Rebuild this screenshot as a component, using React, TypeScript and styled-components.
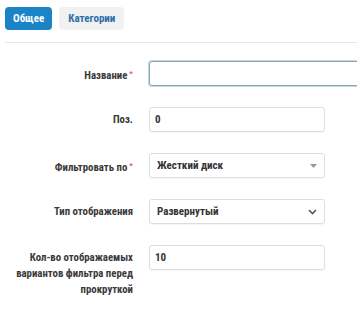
import React from "react";
import styled, { createGlobalStyle } from "styled-components";

const Global = createGlobalStyle`
  html, body { margin: 0; padding: 0; background: #fff; overflow: hidden; }
  body {
    font-family: "Roboto Condensed", "Liberation Sans Narrow", "DejaVu Sans Condensed", Roboto, sans-serif;
    color: #333;
  }
`;

const Page = styled.div`
  width: 357px;
  height: 317px;
  overflow: hidden;
`;

const TabBar = styled.div`
  display: flex;
  gap: 7px;
  margin-left: 5px;
  padding: 7px 0 12px;
  border-bottom: 1px solid #e6e6e6;
`;

const Tab = styled.div<{ $active?: boolean }>`
  height: 23px;
  padding: 0 ${(p) => (p.$active ? "8px" : "9px")};
  display: flex;
  align-items: center;
  border-radius: 4px;
  font-size: 11px;
  font-weight: 700;
  background: ${(p) => (p.$active ? "#1b84c6" : "#f1f1f1")};
  color: ${(p) => (p.$active ? "#fff" : "#2d6ea6")};
`;

const Form = styled.div`
  display: grid;
  grid-template-columns: 133px auto;
  column-gap: 16px;
  row-gap: 21px;
  padding-top: 18px;
  align-items: start;
`;

const Label = styled.div`
  text-align: right;
  font-size: 10.8px;
  font-weight: 700;
  line-height: 16px;
  padding-top: 5px;
  color: #3a3a3a;
`;

const Req = styled.span`
  color: #e25a55;
  font-size: 8px;
  margin-left: 2px;
  vertical-align: 3px;
`;

const Field = styled.div<{ $wide?: boolean; $focus?: boolean }>`
  box-sizing: border-box;
  width: ${(p) => (p.$wide ? "230px" : "176px")};
  height: 25px;
  border: 1px solid ${(p) => (p.$focus ? "#86a9b6" : "#dedede")};
  border-radius: 3px;
  background: #fff;
  box-shadow: ${(p) =>
    p.$focus ? "0 0 0 1px rgba(134,169,182,0.45)" : "0 1px 1px rgba(0,0,0,0.04)"};
  display: flex;
  align-items: center;
  justify-content: space-between;
  padding: 0 7px 0 ${(p) => (p.$focus ? "6px" : "5px")};
  font-size: 11px;
  font-weight: 700;
  color: #333;
`;

const SelectField = styled(Field)`
  padding-left: 7px;
`;

const Arrow = styled.svg`
  display: block;
  flex: none;
`;

export default function App() {
  return (
    <Page>
      <Global />
      <TabBar>
        <Tab $active>Общее</Tab>
        <Tab>Категории</Tab>
      </TabBar>
      <Form>
        <Label>
          Название<Req>*</Req>
        </Label>
        <Field $wide $focus />

        <Label>Поз.</Label>
        <Field>0</Field>

        <Label>
          Фильтровать по<Req>*</Req>
        </Label>
        <SelectField>
          <span>Жесткий диск</span>
          <Arrow width="7" height="4" viewBox="0 0 7 4">
            <path d="M0 0 L7 0 L3.5 4 Z" fill="#9a9a9a" />
          </Arrow>
        </SelectField>

        <Label>Тип отображения</Label>
        <SelectField>
          <span>Развернутый</span>
          <Arrow width="9" height="6" viewBox="0 0 9 6">
            <path d="M1 1 L4.5 4.5 L8 1" fill="none" stroke="#555" strokeWidth="1.6" />
          </Arrow>
        </SelectField>

        <Label>
          Кол-во отображаемых
          <br />
          вариантов фильтра перед
          <br />
          прокруткой
        </Label>
        <Field>10</Field>
      </Form>
    </Page>
  );
}
